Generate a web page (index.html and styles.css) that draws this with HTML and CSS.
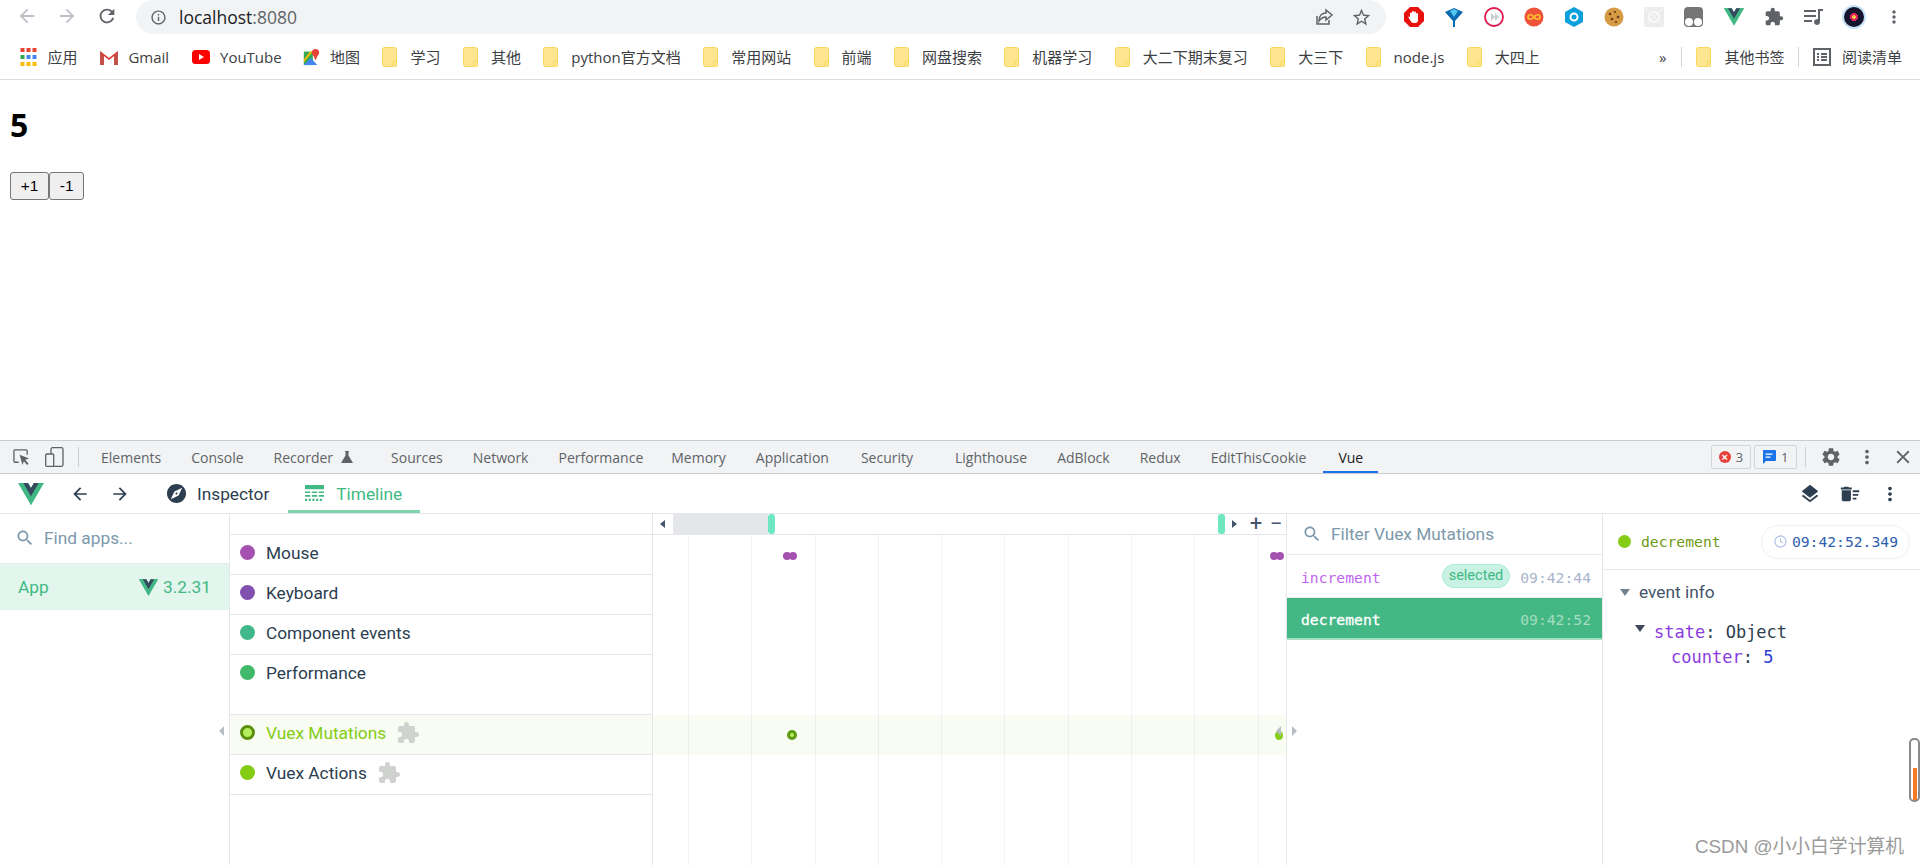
FILE: index.html
```html
<!DOCTYPE html>
<html lang="en">
<head>
    <meta charset="UTF-8">
    <title>localhost:8080</title>
    <link rel="stylesheet" href="styles.css">
</head>
<body>
<svg class="sprite" width="0" height="0">
    <symbol id="i-vue" viewBox="0 0 256 221"><path fill="#41b883" d="M204.8 0H256L128 220.8 0 0h97.92L128 51.2 157.44 0h47.36z"/><path fill="#41b883" d="M0 0l128 220.8L256 0h-51.2L128 132.48 50.56 0H0z"/><path fill="#35495e" d="M50.56 0L128 133.12 204.8 0h-47.36L128 51.2 97.92 0H50.56z"/></symbol>
    <symbol id="i-folder" viewBox="0 0 15 20"><rect x=".5" y=".5" width="14" height="19" rx="2" fill="#fee590" stroke="#f9d75c"/><path d="M11 19.5v-4a1.5 1.5 0 0 1 3.5 0v4" fill="#fee590" stroke="#f9d75c"/></symbol>
    <symbol id="i-search" viewBox="0 0 24 24"><path d="M15.5 14h-.79l-.28-.27C15.41 12.59 16 11.11 16 9.5 16 5.91 13.09 3 9.5 3S3 5.91 3 9.5 5.91 16 9.5 16c1.61 0 3.09-.59 4.23-1.57l.27.28v.79l5 4.99L20.49 19l-4.99-5zm-6 0C7.01 14 5 11.99 5 9.5S7.01 5 9.5 5 14 7.01 14 9.5 11.99 14 9.5 14z"/></symbol>
    <symbol id="i-puzzle" viewBox="0 0 24 24"><path d="M20.5 11H19V7c0-1.1-.9-2-2-2h-4V3.5C13 2.12 11.88 1 10.5 1S8 2.12 8 3.5V5H4c-1.1 0-1.99.9-1.99 2v3.8H3.5c1.49 0 2.7 1.21 2.7 2.7s-1.21 2.7-2.7 2.7H2V20c0 1.1.9 2 2 2h3.8v-1.5c0-1.49 1.21-2.7 2.7-2.7 1.49 0 2.7 1.21 2.7 2.7V22H17c1.1 0 2-.9 2-2v-4h1.5c1.38 0 2.5-1.12 2.5-2.5S21.88 11 20.5 11z"/></symbol>
    <symbol id="i-more" viewBox="0 0 24 24"><path d="M12 8c1.1 0 2-.9 2-2s-.9-2-2-2-2 .9-2 2 .9 2 2 2zm0 2c-1.1 0-2 .9-2 2s.9 2 2 2 2-.9 2-2-.9-2-2-2zm0 6c-1.1 0-2 .9-2 2s.9 2 2 2 2-.9 2-2-.9-2-2-2z"/></symbol>
</svg>

<!-- Browser chrome -->
<header class="toolbar">
    <svg class="nav-icon faded" viewBox="0 0 24 24"><path d="M20 11H7.83l5.59-5.59L12 4l-8 8 8 8 1.41-1.41L7.83 13H20v-2z"/></svg>
    <svg class="nav-icon faded" viewBox="0 0 24 24"><path d="M12 4l-1.41 1.41L16.17 11H4v2h12.17l-5.58 5.59L12 20l8-8z"/></svg>
    <svg class="nav-icon" viewBox="0 0 24 24"><path d="M17.65 6.35C16.2 4.9 14.21 4 12 4c-4.42 0-7.99 3.58-7.99 8s3.57 8 7.99 8c3.73 0 6.84-2.55 7.73-6h-2.08c-.82 2.33-3.04 4-5.65 4-3.31 0-6-2.69-6-6s2.69-6 6-6c1.66 0 3.14.69 4.22 1.78L13 11h7V4l-2.35 2.35z"/></svg>
    <div class="omnibox">
        <svg class="omni-info" viewBox="0 0 24 24"><path d="M11 7h2v2h-2zm0 4h2v6h-2zm1-9C6.48 2 2 6.48 2 12s4.48 10 10 10 10-4.48 10-10S17.52 2 12 2zm0 18c-4.41 0-8-3.59-8-8s3.59-8 8-8 8 3.59 8 8-3.59 8-8 8z"/></svg>
        <span class="url">localhost<span class="url-port">:8080</span></span>
        <svg class="omni-share" viewBox="0 0 20 20"><path d="M3 9v8h12v-4M12 3l6 5-6 5v-3c-3 0-5 1-7 4 0-5 3-8 7-8z" fill="none" stroke="#5f6368" stroke-width="1.5"/></svg>
        <svg class="omni-star" viewBox="0 0 24 24"><path d="M22 9.24l-7.19-.62L12 2 9.19 8.63 2 9.24l5.46 4.73L5.82 21 12 17.27 18.18 21l-1.63-7.03L22 9.24zM12 15.4l-3.76 2.27 1-4.28-3.32-2.88 4.38-.38L12 6.1l1.71 4.04 4.38.38-3.32 2.88 1 4.28L12 15.4z"/></svg>
    </div>
    <div class="extensions">
        <svg class="ext" viewBox="0 0 20 20"><path d="M6 0h8l6 6v8l-6 6H6l-6-6V6z" fill="#e8100c"/><path d="M6 10V6.500a1 1 0 0 1 2 0V5a1 1 0 0 1 2 0v.5a1 1 0 0 1 2 0V7a1 1 0 0 1 2 0v6a3 3 0 0 1-3 3H9.500C8 16 7 15 6 13L4.500 10.500C4 9.500 5.500 9 6 10z" fill="#fff"/></svg>
        <svg class="ext" viewBox="0 0 20 20"><path d="M1 5 L10 1 L19 5 L11 14 V20 H9 V14z" fill="#0c6ab0"/><path d="M6 4 L10 2 L14 4 L10 10z" fill="#57c6ee"/></svg>
        <svg class="ext" viewBox="0 0 20 20"><circle cx="10" cy="10" r="9" fill="#fff" stroke="#e01a4f" stroke-width="1.800"/><path d="M7 6l4 4-4 4zM11 6l4 4-4 4z" fill="#c9ccd1"/></svg>
        <svg class="ext" viewBox="0 0 20 20"><circle cx="10" cy="10" r="9.500" fill="#ee5238"/><path d="M10 10c-2-3-6-3-6 0s4 3 6 0 6-3 6 0-4 3-6 0z" fill="none" stroke="#fdc02f" stroke-width="1.600"/></svg>
        <svg class="ext" viewBox="0 0 20 20"><path d="M10 0l9 5v10l-9 5-9-5V5z" fill="#0b9fdc"/><circle cx="10" cy="10" r="3.500" fill="none" stroke="#fff" stroke-width="2"/></svg>
        <svg class="ext" viewBox="0 0 20 20"><circle cx="10" cy="10" r="9.500" fill="#d69a45"/><circle cx="6" cy="7" r="1.300" fill="#6e3d14"/><circle cx="11" cy="5" r="1.100" fill="#6e3d14"/><circle cx="14" cy="10" r="1.300" fill="#6e3d14"/><circle cx="8" cy="12" r="1.300" fill="#6e3d14"/><circle cx="12" cy="15" r="1.100" fill="#6e3d14"/></svg>
        <svg class="ext" viewBox="0 0 20 20"><rect width="20" height="20" fill="#ececec"/><circle cx="10" cy="10" r="5" fill="none" stroke="#fafafa" stroke-width="2"/><path d="M0 0l20 20M20 0L0 20" stroke="#f8f8f8"/></svg>
        <svg class="ext" viewBox="0 0 20 20"><rect width="19" height="20" rx="4" fill="#757575"/><circle cx="5" cy="15" r="4" fill="#fff"/><circle cx="14" cy="15" r="4" fill="#fff"/></svg>
        <svg class="ext" viewBox="0 0 20 20"><use href="#i-vue"/></svg>
        <svg class="ext ext-grey" viewBox="0 0 24 24"><use href="#i-puzzle"/></svg>
        <svg class="ext" viewBox="0 0 20 20"><path d="M0 3h12v2H0zM0 8h12v2H0zM0 13h8v2H0z" fill="#5f6368"/><path d="M14 2h5v2h-3v11a3 3 0 1 1-2-2.800z" fill="#5f6368"/></svg>
        <div class="avatar"><span class="avatar-disc"></span></div>
        <svg class="ext ext-grey" viewBox="0 0 24 24"><use href="#i-more"/></svg>
    </div>
</header>

<nav class="bookmarks">
    <a class="bm"><svg class="bm-apps" viewBox="0 0 16 18"><rect width="4" height="4" fill="#ea4335"/><rect x="6" width="4" height="4" fill="#ea4335"/><rect x="12" width="4" height="4" fill="#ea4335"/><rect y="7" width="4" height="4" fill="#34a853"/><rect x="6" y="7" width="4" height="4" fill="#4285f4"/><rect x="12" y="7" width="4" height="4" fill="#4285f4"/><rect y="14" width="4" height="4" fill="#fbbc04"/><rect x="6" y="14" width="4" height="4" fill="#fbbc04"/><rect x="12" y="14" width="4" height="4" fill="#fbbc04"/></svg>应用</a>
    <a class="bm"><svg class="bm-logo" viewBox="0 0 18 16"><path d="M0 2l9 7 9-7v14h-4V7L9 11 4 7v9H0z" fill="#d93025"/><path d="M4 7v9H0V2zM14 7v9h4V2z" fill="#c5504a"/></svg>Gmail</a>
    <a class="bm bm-tight"><svg class="bm-logo" viewBox="0 0 18 14"><rect width="18" height="14" rx="3.500" fill="#f00"/><path d="M7 4l5 3-5 3z" fill="#fff"/></svg>YouTube</a>
    <a class="bm"><svg class="bm-logo" viewBox="0 0 18 20"><path d="M1 4h10v15H1z" fill="#34a853"/><path d="M1 19l8-8 7 8z" fill="#4285f4"/><path d="M1 13L8 4h3L1 16z" fill="#fbbc04"/><circle cx="14" cy="5" r="4" fill="#ea4335"/><path d="M11 7l3 7 3-7z" fill="#ea4335"/></svg>地图</a>
    <a class="bm bm-folder"><svg class="folder"><use href="#i-folder"/></svg>学习</a>
    <a class="bm bm-folder"><svg class="folder"><use href="#i-folder"/></svg>其他</a>
    <a class="bm bm-folder"><svg class="folder"><use href="#i-folder"/></svg>python官方文档</a>
    <a class="bm bm-folder"><svg class="folder"><use href="#i-folder"/></svg>常用网站</a>
    <a class="bm bm-folder"><svg class="folder"><use href="#i-folder"/></svg>前端</a>
    <a class="bm bm-folder"><svg class="folder"><use href="#i-folder"/></svg>网盘搜索</a>
    <a class="bm bm-folder"><svg class="folder"><use href="#i-folder"/></svg>机器学习</a>
    <a class="bm bm-folder"><svg class="folder"><use href="#i-folder"/></svg>大二下期末复习</a>
    <a class="bm bm-folder"><svg class="folder"><use href="#i-folder"/></svg>大三下</a>
    <a class="bm bm-folder"><svg class="folder"><use href="#i-folder"/></svg>node.js</a>
    <a class="bm bm-folder"><svg class="folder"><use href="#i-folder"/></svg>大四上</a>
    <div class="bm-end">
        <span class="bm-more">»</span>
        <span class="bm-sep"></span>
        <a class="bm bm-folder"><svg class="folder"><use href="#i-folder"/></svg>其他书签</a>
        <span class="bm-sep"></span>
        <a class="bm"><svg class="bm-list" viewBox="0 0 18 18"><rect x="1" y="1" width="16" height="16" fill="none" stroke="#5f6368" stroke-width="2"/><path d="M4 5h2v2H4zM8 5h6v2H8zM4 8h2v2H4zM8 8h6v2H8zM4 11h2v2H4zM8 11h6v2H8z" fill="#5f6368"/></svg>阅读清单</a>
    </div>
</nav>

<!-- The page under test -->
<main class="page">
    <h1 class="counter">5</h1>
    <div class="buttons">
        <button class="btn">+1</button><button class="btn">-1</button>
    </div>
</main>

<!-- DevTools -->
<section class="devtools">
    <div class="dt-tabs">
        <svg class="dt-inspect" viewBox="0 0 18 18"><path d="M6 14H2a1 1 0 0 1-1-1V2a1 1 0 0 1 1-1h12a1 1 0 0 1 1 1v4" fill="none" stroke="#5f6368" stroke-width="1.400"/><path d="M7 6l10 4-4 1.500 3.500 4-1.500 1.500-3.500-4L10 17z" fill="#5f6368"/></svg>
        <svg class="dt-device" viewBox="0 0 19 20"><rect x="6" y=".7" width="12" height="18.600" rx="1.500" fill="none" stroke="#5f6368" stroke-width="1.300"/><rect x=".7" y="7" width="8" height="12.300" rx="1" fill="#f1f3f4" stroke="#5f6368" stroke-width="1.300"/></svg>
        <span class="dt-sep"></span>
        <a class="dt-tab">Elements</a>
        <a class="dt-tab">Console</a>
        <a class="dt-tab dt-tab-rec">Recorder<svg class="flask" viewBox="0 0 12 12"><path d="M4 0h4v1H7.500v3.500L12 12H0l4.500-7.500V1H4z" fill="#5f6368"/></svg></a>
        <a class="dt-tab">Sources</a>
        <a class="dt-tab">Network</a>
        <a class="dt-tab dt-tab-perf">Performance</a>
        <a class="dt-tab">Memory</a>
        <a class="dt-tab dt-tab-app">Application</a>
        <a class="dt-tab dt-tab-sec">Security</a>
        <a class="dt-tab">Lighthouse</a>
        <a class="dt-tab">AdBlock</a>
        <a class="dt-tab">Redux</a>
        <a class="dt-tab">EditThisCookie</a>
        <a class="dt-tab active">Vue</a>
        <div class="dt-right">
            <span class="dt-badge"><span class="err-dot">×</span>3</span>
            <span class="dt-badge"><svg class="msg-icon" viewBox="0 0 14 14"><path d="M1 0h12a1 1 0 0 1 1 1v9a1 1 0 0 1-1 1H4l-3 3V1z" fill="#1a73e8"/><path d="M3.500 3.500h7v1.300h-7zM3.500 6.500h5v1.300h-5z" fill="#fff"/></svg>1</span>
            <span class="dt-sep dt-sep-right"></span>
            <svg class="dt-tool" viewBox="0 0 24 24"><path d="M19.14 12.94c.04-.3.06-.61.06-.94 0-.32-.02-.64-.07-.94l2.03-1.58c.18-.14.23-.41.12-.61l-1.92-3.32c-.12-.22-.37-.29-.59-.22l-2.39.96c-.5-.38-1.03-.7-1.62-.94l-.36-2.54c-.04-.24-.24-.41-.48-.41h-3.84c-.24 0-.43.17-.47.41l-.36 2.54c-.59.24-1.13.57-1.62.94l-2.39-.96c-.22-.08-.47 0-.59.22L2.74 8.87c-.12.21-.08.47.12.61l2.03 1.58c-.05.3-.09.63-.09.94s.02.64.07.94l-2.03 1.58c-.18.14-.23.41-.12.61l1.92 3.32c.12.22.37.29.59.22l2.39-.96c.5.38 1.03.7 1.62.94l.36 2.54c.05.24.24.41.48.41h3.84c.24 0 .44-.17.47-.41l.36-2.54c.59-.24 1.13-.56 1.62-.94l2.39.96c.22.08.47 0 .59-.22l1.92-3.32c.12-.22.07-.47-.12-.61l-2.01-1.58zM12 15.6c-1.98 0-3.6-1.62-3.6-3.6s1.62-3.6 3.6-3.6 3.6 1.62 3.6 3.6-1.62 3.6-3.6 3.6z"/></svg>
            <svg class="dt-tool" viewBox="0 0 24 24"><use href="#i-more"/></svg>
            <svg class="dt-tool" viewBox="0 0 24 24"><path d="M19 6.41L17.59 5 12 10.59 6.41 5 5 6.41 10.59 12 5 17.59 6.41 19 12 13.41 17.59 19 19 17.59 13.41 12z"/></svg>
        </div>
    </div>

    <div class="vue-bar">
        <svg class="vue-logo"><use href="#i-vue"/></svg>
        <svg class="vue-arrow" viewBox="0 0 24 24"><path d="M20 11H7.830l5.590-5.590L12 4l-8 8 8 8 1.410-1.410L7.830 13H20v-2z"/></svg>
        <svg class="vue-arrow" viewBox="0 0 24 24"><path d="M12 4l-1.410 1.410L16.170 11H4v2h12.170l-5.580 5.590L12 20l8-8z"/></svg>
        <a class="vue-tab"><svg class="vue-tab-icon" viewBox="2 2 20 20"><path d="M12 10.900c-.61 0-1.100.49-1.100 1.100s.49 1.100 1.100 1.100c.61 0 1.100-.49 1.100-1.100s-.49-1.100-1.100-1.100zM12 2C6.480 2 2 6.480 2 12s4.480 10 10 10 10-4.480 10-10S17.520 2 12 2zm2.190 12.190L6 18l3.810-8.190L18 6l-3.810 8.190z"/></svg>Inspector</a>
        <a class="vue-tab active"><svg class="vue-tab-icon" viewBox="0 0 18 18"><path d="M0 1h18v4H0zM0 7h5v1.500H0zM6.500 7h5v1.500h-5zM13 7h5v1.500h-5zM0 10.500h5V12H0zM6.500 10.500h5V12h-5zM13 10.500h5V12h-5zM0 14h2v2H0zM3.500 14h2v2h-2zM7 14h2v2H7zM10.500 14h2v2h-2zM14 14h2v2h-2z"/></svg>Timeline</a>
        <div class="vue-tools">
            <svg class="vue-tool" viewBox="0 0 24 24"><path d="M11.990 18.540l-7.370-5.730L3 14.070l9 7 9-7-1.630-1.270-7.380 5.740zM12 16l7.360-5.730L21 9l-9-7-9 7 1.630 1.270L12 16z"/></svg>
            <svg class="vue-tool" viewBox="0 0 24 24"><path d="M15 16h4v2h-4zm0-8h7v2h-7zm0 4h6v2h-6zM3 18c0 1.100.9 2 2 2h6c1.100 0 2-.9 2-2V8H3v10zM14 5h-3l-1-1H6L5 5H2v2h12z"/></svg>
            <svg class="vue-tool" viewBox="0 0 24 24"><use href="#i-more"/></svg>
        </div>
    </div>

    <div class="vue-main">
        <aside class="apps">
            <div class="search apps-search"><svg class="search-icon"><use href="#i-search"/></svg>Find apps...</div>
            <div class="app-row"><span>App</span><span class="app-version"><svg class="app-logo"><use href="#i-vue"/></svg>3.2.31</span></div>
            <span class="caret caret-left caret-apps"></span>
        </aside>

        <div class="layers">
            <div class="ruler-spacer"></div>
            <div class="layer"><span class="dot dot-mouse"></span>Mouse</div>
            <div class="layer"><span class="dot dot-keyboard"></span>Keyboard</div>
            <div class="layer"><span class="dot dot-component"></span>Component events</div>
            <div class="layer layer-tall"><span class="dot dot-perf"></span>Performance</div>
            <div class="layer layer-hover"><span class="dot dot-ring"></span>Vuex Mutations<svg class="plugin"><use href="#i-puzzle"/></svg></div>
            <div class="layer"><span class="dot dot-vuex"></span>Vuex Actions<svg class="plugin"><use href="#i-puzzle"/></svg></div>
        </div>

        <div class="timeline">
            <div class="ruler">
                <span class="caret caret-left ruler-back"></span>
                <div class="scrollbar">
                    <span class="scroll-grey"></span>
                    <span class="scroll-handle"></span>
                    <span class="scroll-fill"></span>
                    <span class="scroll-handle"></span>
                </div>
                <span class="caret caret-right ruler-next"></span>
                <span class="zoom-btn">+</span>
                <span class="zoom-btn">−</span>
            </div>
            <div class="lanes">
                <div class="lane">
                    <span class="ev ev-mouse ev-a"></span><span class="ev ev-mouse ev-b"></span>
                    <span class="ev ev-mouse ev-c"></span><span class="ev ev-mouse ev-d"></span>
                </div>
                <div class="lane"></div>
                <div class="lane"></div>
                <div class="lane lane-tall"></div>
                <div class="lane lane-hover">
                    <span class="ev-ring"></span>
                    <span class="ev-end"></span>
                </div>
                <div class="lane"></div>
            </div>
        </div>

        <div class="events">
            <div class="search events-search"><svg class="search-icon"><use href="#i-search"/></svg>Filter Vuex Mutations</div>
            <div class="event">
                <span class="event-name">increment</span>
                <span class="event-tag">selected</span>
                <span class="event-time">09:42:44</span>
            </div>
            <div class="event event-active">
                <span class="event-name">decrement</span>
                <span class="event-time">09:42:52</span>
            </div>
            <span class="caret caret-left caret-events-l"></span>
            <span class="caret caret-right caret-events-r"></span>
        </div>

        <div class="details">
            <div class="detail-head">
                <span class="dot dot-vuex"></span>
                <span class="detail-name">decrement</span>
                <span class="detail-time"><svg class="clock" viewBox="0 0 14 14"><circle cx="7" cy="7" r="6" fill="none" stroke="#a9bfe4" stroke-width="1.200"/><path d="M7 3.500V7l2.500 1.500" fill="none" stroke="#a9bfe4" stroke-width="1.100"/></svg>09:42:52.349</span>
            </div>
            <div class="detail-section"><span class="tri tri-grey"></span>event info</div>
            <div class="state-line state-root"><span class="tri tri-dark"></span><span class="key">state</span>: Object</div>
            <div class="state-line state-child"><span class="key">counter</span>: <span class="num">5</span></div>
        </div>
    </div>
</section>

<div class="gauge"><span class="gauge-fill"></span></div>
<div class="watermark">CSDN @小小白学计算机</div>
</body>
</html>
```

FILE: styles.css
```css
* {
    box-sizing: border-box;
}
html, body {
    margin: 0;
    height: 865px;
    overflow: hidden;
}
body {
    position: relative;
    display: flex;
    flex-direction: column;
    font-family: "Open Sans", "Noto Sans CJK SC", sans-serif;
    background-color: #fff;
}
.sprite {
    position: absolute;
}

/* toolbar */
.toolbar {
    display: flex;
    align-items: flex-start;
    height: 34px;
    padding-left: 16px;
    flex: none;
}
.nav-icon {
    width: 22px;
    height: 22px;
    margin: 5px 18px 0 0;
    fill: #5f6368;
}
.nav-icon.faded {
    fill: #bdc1c6;
}
.omnibox {
    display: flex;
    align-items: center;
    width: 1250px;
    height: 34px;
    padding: 0 14px;
    background-color: #f1f3f4;
    border-radius: 17px;
}
.omni-info {
    width: 17px;
    height: 17px;
    fill: #5f6368;
}
.url {
    margin-left: 12px;
    font-size: 17.5px;
    color: #202124;
}
.url-port {
    color: #5f6368;
}
.omni-share {
    width: 20px;
    height: 20px;
    margin-left: auto;
}
.omni-star {
    width: 21px;
    height: 21px;
    margin-left: 17px;
    fill: #5f6368;
}
.extensions {
    display: flex;
    align-items: center;
    gap: 20px;
    height: 34px;
    margin-left: 18px;
}
.ext {
    width: 20px;
    height: 20px;
}
.ext-grey {
    fill: #5f6368;
}
.avatar {
    display: flex;
    align-items: center;
    justify-content: center;
    width: 24px;
    height: 24px;
    margin: 0 -2px;
    border-radius: 50%;
    background-color: #c8e3f8;
}
.avatar-disc {
    width: 20px;
    height: 20px;
    border-radius: 50%;
    background: radial-gradient(circle, #f5c542 0 2px, #e0245e 2px 4px, #14142c 4px);
}

/* bookmarks */
.bookmarks {
    display: flex;
    align-items: center;
    gap: 22.4px;
    height: 46px;
    padding-left: 20px;
    flex: none;
    border-bottom: 1px solid #dadce0;
    font-size: 15px;
    color: #3c4043;
}
.bm {
    display: flex;
    align-items: center;
    white-space: nowrap;
    gap: 10.500px;
}
.bm-tight {
    margin-right: -2.500px;
}
.bm-folder {
    gap: 13px;
}
.bm-apps {
    width: 17px;
    height: 18px;
}
.bm-logo {
    width: 18px;
    height: 18px;
}
.folder {
    width: 15px;
    height: 20px;
}
.bm-list {
    width: 18px;
    height: 18px;
}
.bm-end {
    display: flex;
    align-items: center;
    gap: 14px;
    position: absolute;
    right: 18px;
}
.bm-more {
    font-size: 15px;
    margin-right: 1px;
}
.bm-sep {
    width: 1px;
    height: 20px;
    background-color: #d3d5d8;
}

/* page content */
.page {
    flex: none;
    height: 360px;
    padding: 0 10px;
}
.counter {
    margin: 22px 0 24px;
    font-size: 32px;
    line-height: 46px;
    font-weight: 700;
    color: #000;
}
.buttons {
    display: flex;
}
.btn {
    height: 28px;
    padding: 0 9.700px;
    border: 1px solid #767676;
    border-radius: 3px;
    background-color: #efefef;
    font-family: "Liberation Sans", sans-serif;
    font-size: 15.500px;
    color: #000;
}

/* devtools tab strip */
.devtools {
    flex: 1;
    display: flex;
    flex-direction: column;
    min-height: 0;
}
.dt-tabs {
    display: flex;
    align-items: center;
    height: 34px;
    flex: none;
    padding-left: 13px;
    background-color: #f1f3f4;
    border-top: 1px solid #cbcdd1;
    border-bottom: 1px solid #cbcdd1;
    font-size: 14px;
    color: #5f6368;
}
.dt-inspect {
    width: 17px;
    height: 17px;
}
.dt-device {
    width: 19px;
    height: 20px;
    margin-left: 15px;
}
.dt-sep {
    width: 1px;
    height: 20px;
    margin: 0 7px 0 14px;
    background-color: #ccced1;
}
.dt-tab {
    display: flex;
    align-items: center;
    gap: 8px;
    height: 32px;
    padding: 0 15px;
    white-space: nowrap;
}
.dt-tab.active {
    margin-left: 2px;
    color: #202124;
    border-bottom: 2px solid #1a73e8;
    padding-top: 2px;
}
.dt-tab-rec {
    padding-right: 23px;
}
.dt-tab-perf {
    padding-right: 13px;
}
.dt-tab-app {
    padding-right: 17px;
}
.dt-tab-sec {
    padding-right: 27px;
}
.flask {
    width: 12px;
    height: 12px;
}
.dt-right {
    display: flex;
    align-items: center;
    margin-left: auto;
    padding-right: 6.500px;
}
.dt-badge {
    display: flex;
    align-items: center;
    gap: 5px;
    height: 24px;
    margin-right: 3px;
    padding: 0 7px;
    border: 1px solid #d3d5d8;
    border-radius: 2px;
    font-size: 13px;
}
.err-dot {
    display: flex;
    align-items: center;
    justify-content: center;
    width: 12px;
    height: 12px;
    border-radius: 50%;
    background-color: #e8403a;
    font-family: "Liberation Sans", sans-serif;
    font-size: 11px;
    font-weight: 700;
    color: #fff;
}
.msg-icon {
    width: 14px;
    height: 14px;
}
.dt-sep-right {
    margin: 0 14px 0 5px;
}
.dt-tool {
    width: 22px;
    height: 22px;
    margin-left: 14px;
    fill: #5f6368;
}
.dt-sep-right + .dt-tool {
    margin-left: 0;
}

/* vue devtools bar */
.vue-bar {
    display: flex;
    align-items: center;
    height: 40px;
    flex: none;
    padding-left: 18px;
    border-bottom: 1px solid #e4e6e9;
    font-family: Roboto, sans-serif;
    font-size: 17.300px;
    color: #2c3e50;
}
.vue-logo {
    width: 26px;
    height: 22px;
    margin-right: 26px;
}
.vue-arrow {
    width: 20px;
    height: 20px;
    margin-right: 20px;
    fill: #2c3e50;
}
.vue-tab {
    display: flex;
    align-items: center;
    gap: 11px;
    height: 39px;
    padding: 0 18px 0 17px;
}
.vue-tab.active {
    gap: 12px;
    margin-left: 1px;
    color: #42b983;
    border-bottom: 3px solid #7fd4ac;
    padding-top: 3px;
}
.vue-tab-icon {
    width: 19px;
    height: 19px;
    fill: #2c3e50;
}
.vue-tab.active .vue-tab-icon {
    fill: #42b983;
}
.vue-tools {
    display: flex;
    gap: 18px;
    margin-left: auto;
    padding-right: 19px;
}
.vue-tool {
    width: 22px;
    height: 22px;
    fill: #2c3e50;
}

/* main grid */
.vue-main {
    display: grid;
    grid-template-columns: 230px 423px 633px 317px 317px;
    flex: 1;
    min-height: 0;
    font-family: Roboto, sans-serif;
    font-size: 17.300px;
    color: #2c3e50;
}
.search {
    display: flex;
    align-items: center;
    color: #7c99ab;
    border-bottom: 1px solid #e8eaed;
}
.search-icon {
    width: 20px;
    height: 20px;
    fill: #7c99ab;
}
.apps {
    position: relative;
    border-right: 1px solid #e4e6e9;
}
.apps-search {
    height: 50px;
    gap: 9px;
    padding: 0 0 2px 15px;
}
.app-row {
    display: flex;
    align-items: center;
    justify-content: space-between;
    height: 46px;
    padding: 0 18px 0 18px;
    background-color: #e2f6ee;
    color: #42b983;
}
.app-version {
    display: flex;
    align-items: center;
    gap: 5px;
}
.app-logo {
    width: 19px;
    height: 17px;
}

/* carets */
.caret {
    display: inline-block;
    width: 0;
    height: 0;
    border-top: 5px solid transparent;
    border-bottom: 5px solid transparent;
}
.caret-left {
    border-right: 5px solid #b9bec5;
}
.caret-right {
    border-left: 5px solid #b9bec5;
}
.caret-apps {
    position: absolute;
    top: 212px;
    left: 219px;
}

/* layer names */
.ruler-spacer {
    height: 21px;
    border-bottom: 1px solid #e4e6e9;
}
.layers {
    border-right: 1px solid #e4e6e9;
}
.layer {
    display: flex;
    align-items: center;
    height: 40px;
    padding: 0 0 4px 10px;
    border-bottom: 1px solid #e4e6e9;
}
.layer-tall {
    height: 60px;
    padding-bottom: 24px;
}
.layer-hover {
    background-color: #f8fcf2;
    color: #84cc16;
}
.dot {
    width: 15px;
    height: 15px;
    margin-right: 11px;
    border-radius: 50%;
    flex: none;
}
.dot-mouse { background-color: #a451af; }
.dot-keyboard { background-color: #8151af; }
.dot-component { background-color: #41b88c; }
.dot-perf { background-color: #41b86a; }
.dot-vuex { background-color: #84cc16; }
.dot-ring {
    background-color: #b5ee5e;
    border: 3px solid #5a8f0e;
}
.plugin {
    width: 24px;
    height: 24px;
    margin-left: 10px;
    fill: #cfd2cf;
}

/* timeline */
.timeline {
    display: flex;
    flex-direction: column;
    min-width: 0;
}
.ruler {
    display: flex;
    align-items: center;
    height: 21px;
    flex: none;
    border-bottom: 1px solid #e4e6e9;
    color: #44546a;
}
.ruler .caret {
    border-top-width: 4px;
    border-bottom-width: 4px;
    border-left-color: #44546a;
    border-right-color: #44546a;
}
.ruler-back {
    margin: 0 8px 0 7px;
}
.ruler-next {
    margin-left: 7px;
}
.scrollbar {
    display: flex;
    align-items: stretch;
    width: 552px;
    height: 20px;
}
.scroll-grey {
    width: 95px;
    background-color: #e4e6ea;
}
.scroll-handle {
    width: 7px;
    border-radius: 3px;
    background-color: #6ee7c0;
}
.scroll-fill {
    flex: 1;
}
.zoom-btn {
    width: 20px;
    font-size: 22px;
    line-height: 20px;
    text-align: center;
}
.ruler-next + .zoom-btn {
    margin-left: 9px;
}
.lanes {
    flex: 1;
    background-image: repeating-linear-gradient(90deg, transparent 0, transparent 35px, #f2f3f4 35px, #f2f3f4 36px, transparent 36px, transparent 63.3px);
}
.lane {
    position: relative;
    height: 40px;
}
.lane-tall {
    height: 60px;
}
.lane-hover {
    background-color: rgba(132, 204, 22, 0.05);
}
.ev {
    position: absolute;
    top: 17px;
    width: 8px;
    height: 8px;
    border-radius: 50%;
}
.ev-mouse { background-color: #a451af; }
.ev-a { left: 130px; }
.ev-b { left: 136px; }
.ev-c { left: 617px; }
.ev-d { left: 623px; }
.ev-ring {
    position: absolute;
    top: 15px;
    left: 134px;
    width: 10px;
    height: 10px;
    border-radius: 50%;
    border: 3px solid #5f9a10;
    background-color: #b5ee5e;
}
.ev-end {
    position: absolute;
    top: 16px;
    left: 622px;
    width: 8px;
    height: 9px;
    border-radius: 50%;
    background-color: #84cc16;
}

/* event list */
.events {
    position: relative;
    border-left: 1px solid #e4e6e9;
    border-right: 1px solid #e4e6e9;
}
.events-search {
    height: 41px;
    gap: 9px;
    padding-left: 15px;
}
.event {
    display: flex;
    align-items: center;
    height: 43px;
    padding: 3px 11px 0 14px;
    font-family: "DejaVu Sans Mono", monospace;
    font-size: 14.700px;
    color: #c065f0;
    border-bottom: 1px solid #e8eaed;
}
.event-tag {
    margin: -4px 10px 0 auto;
    padding: 0 6px;
    height: 24px;
    line-height: 22px;
    border: 1px solid #a9eed8;
    border-radius: 12px;
    background-color: #c9f2e5;
    font-family: Roboto, sans-serif;
    font-size: 14.500px;
    color: #42b983;
}
.event-time {
    color: #a9b5cc;
}
.event-active {
    justify-content: space-between;
    height: 42px;
    background-color: #43b884;
    border-bottom: 2px solid #a5e0c5;
    color: #fff;
}
.event-active .event-name {
    -webkit-text-stroke: 0.3px #fff;
}
.event-active .event-time {
    color: #a3dcc2;
}
.caret-events-l {
    position: absolute;
    top: 212px;
    left: -11px;
}
.caret-events-r {
    position: absolute;
    top: 212px;
    left: 5px;
}

/* details */
.detail-head {
    display: flex;
    align-items: center;
    height: 56px;
    padding: 0 10px 0 15px;
    border-bottom: 1px solid #e8eaed;
    font-family: "DejaVu Sans Mono", monospace;
    font-size: 14.700px;
}
.detail-head .dot {
    width: 13px;
    height: 13px;
    margin-right: 10px;
}
.detail-name {
    color: #6f9a17;
}
.detail-time {
    display: flex;
    align-items: center;
    gap: 5px;
    height: 34px;
    margin-left: auto;
    padding: 0 11px 0 12px;
    border: 1px solid #eef1f6;
    border-radius: 17px;
    color: #2f5fb0;
}
.clock {
    width: 13px;
    height: 13px;
}
.detail-section {
    display: flex;
    align-items: center;
    height: 46px;
    padding: 0 0 2px 17px;
    color: #44546a;
}
.tri {
    width: 0;
    height: 0;
    border-left: 5px solid transparent;
    border-right: 5px solid transparent;
}
.tri-grey {
    margin-right: 9px;
    border-top: 7px solid #76808f;
}
.tri-dark {
    position: absolute;
    margin: 5px 0 0 -19px;
    border-top: 7px solid #3c4a5a;
}
.state-line {
    height: 25px;
    padding-left: 51px;
    font-family: "DejaVu Sans Mono", monospace;
    font-size: 17px;
    line-height: 25px;
    color: #2c3e50;
}
.state-root {
    margin-top: 3.500px;
}
.state-child {
    padding-left: 68px;
}
.key {
    color: #8b3ce0;
}
.num {
    color: #2c40d8;
}

/* overlays that sit on top of the capture */
.gauge {
    position: absolute;
    top: 738px;
    right: 0;
    width: 11px;
    height: 64px;
    padding-top: 28px;
    border: 2px solid #8a8a8a;
    border-radius: 5px;
    background-color: #fff;
}
.gauge-fill {
    display: block;
    width: 4px;
    height: 32px;
    margin-left: 2px;
    background-color: #f47a26;
}
.watermark {
    position: absolute;
    top: 831px;
    right: 16px;
    font-family: "Liberation Sans", "Noto Sans CJK SC", sans-serif;
    font-size: 18.800px;
    color: #9a9a9a;
}
```
